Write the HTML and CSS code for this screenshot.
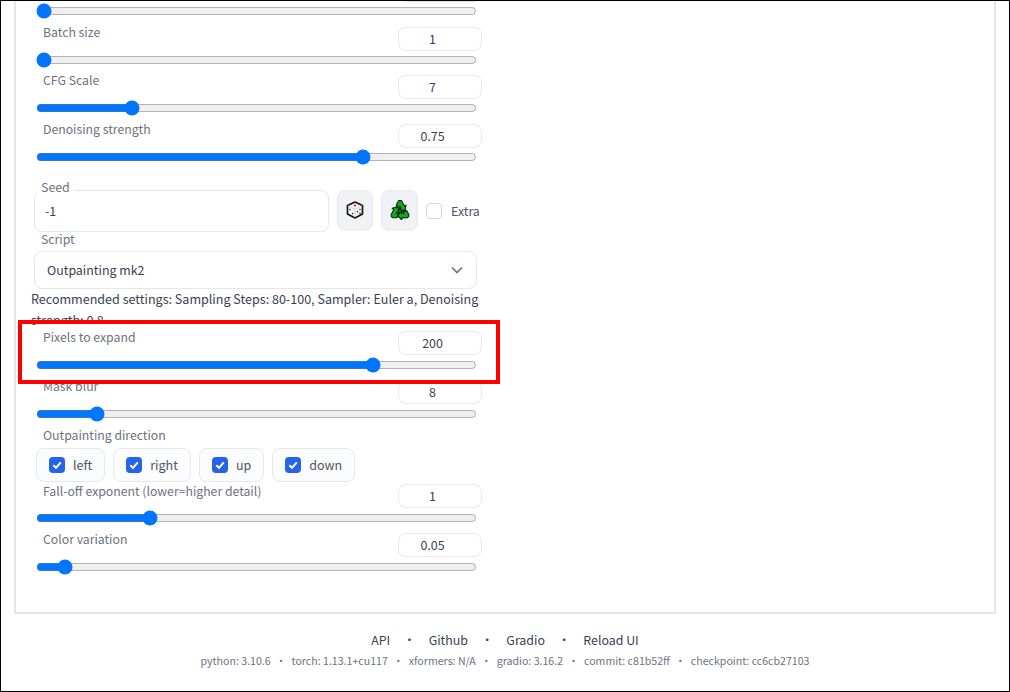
FILE: index.html
```html
<!DOCTYPE html>
<html lang="en">
<head>
<meta charset="utf-8">
<title>Outpainting mk2</title>
<link rel="stylesheet" href="styles.css">
</head>
<body>
<div class="frame">
  <main class="panel">
    <div class="slider first"><div class="slider-head"><label>Batch count</label><input class="num" type="number" value="1"></div><input class="range" type="range" min="1" max="100" value="1"></div>
    <div class="slider"><div class="slider-head"><label>Batch size</label><input class="num" type="number" value="1"></div><input class="range" type="range" min="1" max="8" value="1"></div>
    <div class="slider"><div class="slider-head"><label>CFG Scale</label><input class="num" type="number" value="7"></div><input class="range" type="range" min="1" max="30" value="7"></div>
    <div class="slider tall"><div class="slider-head"><label>Denoising strength</label><input class="num" type="number" value="0.75"></div><input class="range" type="range" min="0" max="1" step="0.01" value="0.75"></div>

    <div class="seed-row">
      <div class="seed-box"><span class="seed-label">Seed</span><input class="seed-input" type="number" value="-1"></div>
      <button class="tool dice" type="button" aria-label="Random seed">
        <svg width="20" height="20" viewBox="0 0 20 20">
          <path d="M10 2 L17.5 5.5 L17.5 14 L10 18 L2.5 14 L2.5 5.5 Z" fill="#f6f6f6" stroke="#141414" stroke-width="1.7" stroke-linejoin="round"/>
          <path d="M2.8 5.8 L10 9.4 L17.2 5.8 M10 9.4 V17.6" fill="none" stroke="#c4c4c4" stroke-width=".7"/>
          <circle cx="10" cy="5.6" r="1.1" fill="#d8232a"/>
          <circle cx="5" cy="9.5" r=".8" fill="#333"/><circle cx="7.6" cy="13.6" r=".8" fill="#333"/>
          <circle cx="15" cy="9.5" r=".8" fill="#333"/><circle cx="12.5" cy="11.6" r=".8" fill="#333"/><circle cx="15" cy="13.4" r=".8" fill="#333"/>
        </svg>
      </button>
      <button class="tool recycle" type="button" aria-label="Reuse seed">
        <svg width="20" height="20" viewBox="0 0 20 20">
          <g transform="translate(0 -1.2) scale(1 1.1)" fill="#12a81a" stroke="#04280a" stroke-width="1" stroke-linejoin="round">
            <path d="M10 1.4 L18.6 16 L1.4 16 Z" fill="#0c7a13" stroke="#04280a" stroke-width="1.4"/>
            <path d="M7.6 12.6 L10 8.6 L12.4 12.6 Z" fill="#2f8f35" stroke="none"/>
            <path id="arrow" d="M6.4 5.4 L8.4 1.8 Q10 1 11.6 1.8 L14.4 6.6 L16.2 5.6 L14.6 11.2 L9.2 9.8 L11 8.8 L9.9 6.8 L8.6 8.8 Z"/>
            <use href="#arrow" transform="rotate(120 10 11.2)"/>
            <use href="#arrow" transform="rotate(240 10 11.2)"/>
          </g>
        </svg>
      </button>
      <label class="extra"><span class="box"></span><span>Extra</span></label>
    </div>

    <div class="script-block">
      <span class="field-label">Script</span>
      <div class="select">
        <span>Outpainting mk2</span>
        <svg width="12" height="8" viewBox="0 0 12 8"><path d="M1 1.5 L6 6.5 L11 1.5" fill="none" stroke="#6b7280" stroke-width="1.6"/></svg>
      </div>
    </div>

    <p class="note">Recommended settings: Sampling Steps: 80-100, Sampler: Euler a, Denoising strength: 0.8</p>

    <div class="slider cover pixels"><div class="slider-head"><label>Pixels to expand</label><input class="num" type="number" value="200"></div><input class="range" type="range" min="8" max="256" value="200"></div>
    <div class="slider cover mask"><div class="slider-head"><label>Mask blur</label><input class="num" type="number" value="8"></div><input class="range" type="range" min="0" max="64" value="8"></div>

    <div class="direction">
      <span class="field-label">Outpainting direction</span>
      <div class="checks">
        <label class="check"><span class="tick"><svg width="16" height="16" viewBox="0 0 16 16"><path d="M4.3 8.2 L7 10.8 L11.8 5.4" fill="none" stroke="#fff" stroke-width="2"/></svg></span>left</label>
        <label class="check"><span class="tick"><svg width="16" height="16" viewBox="0 0 16 16"><path d="M4.3 8.2 L7 10.8 L11.8 5.4" fill="none" stroke="#fff" stroke-width="2"/></svg></span>right</label>
        <label class="check"><span class="tick"><svg width="16" height="16" viewBox="0 0 16 16"><path d="M4.3 8.2 L7 10.8 L11.8 5.4" fill="none" stroke="#fff" stroke-width="2"/></svg></span>up</label>
        <label class="check"><span class="tick"><svg width="16" height="16" viewBox="0 0 16 16"><path d="M4.3 8.2 L7 10.8 L11.8 5.4" fill="none" stroke="#fff" stroke-width="2"/></svg></span>down</label>
      </div>
    </div>

    <div class="slider falloff"><div class="slider-head"><label>Fall-off exponent (lower=higher detail)</label><input class="num" type="number" value="1"></div><input class="range" type="range" min="0" max="4" step="0.01" value="1"></div>
    <div class="slider color"><div class="slider-head"><label>Color variation</label><input class="num" type="number" value="0.05"></div><input class="range" type="range" min="0" max="1" step="0.01" value="0.05"></div>
  </main>

  <footer class="footer">
    <nav class="links"><a>API</a><span class="dot">•</span><a>Github</a><span class="dot">•</span><a>Gradio</a><span class="dot">•</span><a>Reload UI</a></nav>
    <div class="versions"><span>python: 3.10.6</span><span class="vdot">•</span><span>torch: 1.13.1+cu117</span><span class="vdot">•</span><span>xformers: N/A</span><span class="vdot">•</span><span>gradio: 3.16.2</span><span class="vdot">•</span><span>commit: c81b52ff</span><span class="vdot">•</span><span>checkpoint: cc6cb27103</span></div>
  </footer>

  <div class="highlight"></div>
</div>
</body>
</html>
```
FILE: styles.css
```css
* { box-sizing: border-box; }
html, body { margin: 0; padding: 0; background: #fff; }
body { font-family: "Noto Sans CJK SC", "Noto Sans", sans-serif; font-size: 12.4px; color: #374151; }

.frame {
  position: relative;
  width: 1010px;
  height: 692px;
  border: 1px solid #000;
  overflow: hidden;
  background: #fff;
}

.panel {
  display: flow-root;
  width: 982px;
  height: 613px;
  margin-left: 13px;
  padding-left: 20px;
  border: 2px solid #e5e5ea;
  border-top: 0;
}

.slider { width: 446px; height: 48.5px; }
.slider.first { margin-top: -23px; }
.slider.tall { height: 66px; }
.slider-head { display: flex; justify-content: space-between; height: 24px; padding-left: 7px; }
.slider-head label { color: #6b7280; font-size: 12.25px; line-height: 20px; margin-top: -5px; }
.slider.cover { position: relative; background: #fff; }

.num {
  width: 84px;
  height: 24px;
  padding: 0;
  border: 1px solid #e8e8ec;
  border-radius: 8px;
  background: #fff;
  color: #374151;
  font: inherit;
  text-align: center;
  outline: 0;
}

.range { display: block; width: 441px; height: 16px; margin: 1px 0 0 0; }

.seed-row { display: flex; align-items: flex-start; height: 42px; margin-left: -2px; }
.seed-box { position: relative; width: 295px; height: 42px; border: 1px solid #e5e7eb; border-radius: 8px; }
.seed-label { position: absolute; left: 2px; top: -14px; padding: 0 4px; background: #fff; color: #6b7280; line-height: 20px; }
.seed-input { width: 100%; height: 40px; padding: 0 10px; border: 0; border-radius: 8px; background: transparent; color: #374151; font: inherit; outline: 0; }
.tool {
  display: flex; align-items: center; justify-content: center;
  width: 36px; height: 40px; margin-left: 8px; padding: 0;
  border: 1px solid #e9e9ee; border-radius: 8px;
  background: #f1f2f5;
  box-shadow: 0 1px 2px rgba(0,0,0,.05);
}
.tool.recycle { width: 37px; }
.extra { display: flex; align-items: center; gap: 9px; height: 42px; margin-left: 8px; color: #4b5563; }
.box { width: 16px; height: 16px; border: 1px solid #d1d5db; border-radius: 4px; background: #fff; }

.script-block { margin-left: -2px; width: 443px; }
.field-label { display: block; color: #6b7280; font-size: 12.25px; line-height: 20px; padding-left: 7px; }
.script-block .field-label { height: 19px; position: relative; top: -3px; }
.select {
  display: flex; align-items: center; justify-content: space-between;
  height: 38px; padding: 0 13px 0 12px;
  border: 1px solid #e5e7eb; border-radius: 8px; background: #fff;
}

.note { width: 452px; height: 35px; margin: -1px 0 0 -5px; padding-top: 0; line-height: 21px; font-size: 12.55px; color: #374151; }

.pixels { height: 57px; padding-top: 8px; }
.pixels .range { margin-top: 2px; }
.pixels .slider-head label { margin-top: -4px; }
.mask { height: 45px; }
.mask .range { margin-top: 2px; }
.mask .slider-head label { margin-top: -4px; }

.direction .field-label { height: 22px; }
.checks { display: flex; gap: 8px; margin-top: 1px; }
.check {
  display: flex; align-items: center; gap: 8px;
  height: 34px; padding: 0 12px;
  border: 1px solid #e7e7ec; border-radius: 8px;
  background: #fbfcfd;
  color: #4b5563;
  font-size: 12.5px;
}
.tick { display: block; width: 16px; height: 16px; border-radius: 4px; background: #2563eb; }
.tick svg { display: block; }
.falloff { height: 49px; margin-top: 2px; }
.falloff .range { margin-top: 2px; }
.falloff .slider-head label { margin-top: -3px; }
.color .range { margin-top: 2px; }
.color .slider-head label { margin-top: -4px; }

.footer { text-align: center; }
.links { display: flex; justify-content: center; gap: 13px; margin-top: 16px; line-height: 20px; font-size: 12.4px; color: #374151; }
.versions { display: flex; justify-content: center; gap: 5.2px; margin-top: 3px; font-size: 10.6px; line-height: 16px; color: #6b7280; }

.highlight {
  position: absolute;
  left: 17px;
  top: 319px;
  width: 482px;
  height: 64px;
  border: 4px solid #f00;
  pointer-events: none;
}
```
